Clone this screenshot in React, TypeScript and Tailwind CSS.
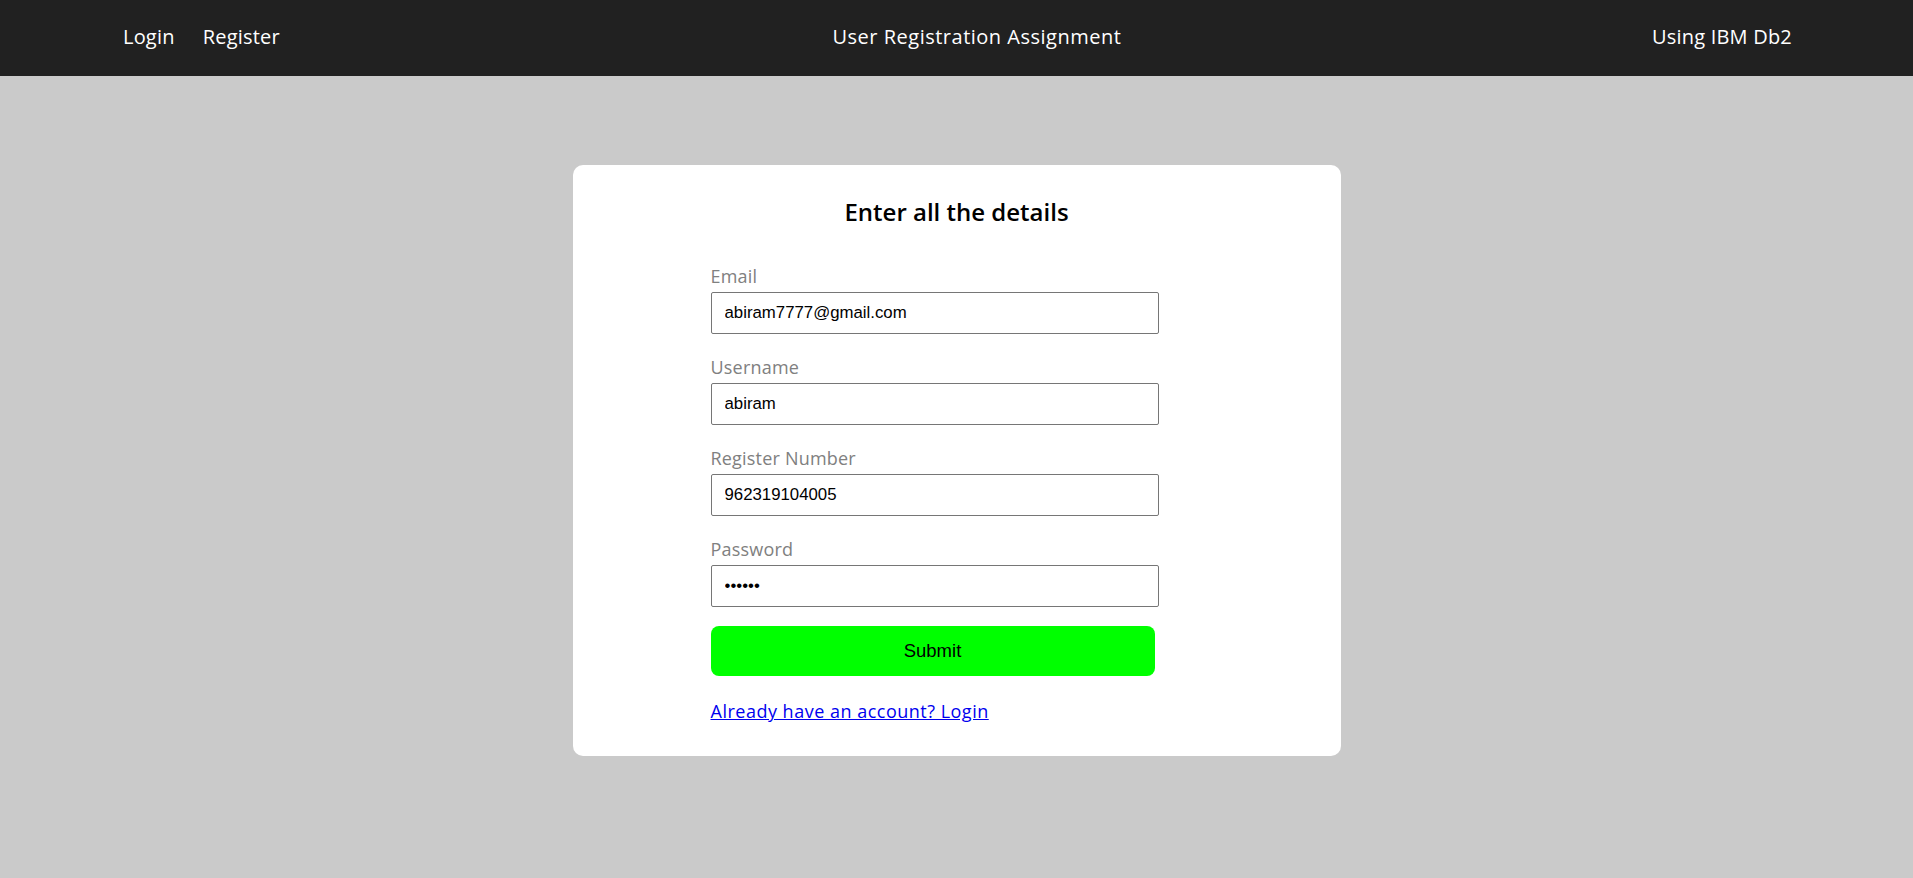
import { useState } from 'react';

const poppins = { fontFamily: '"Open Sans", "Noto Sans", sans-serif' };

type Field = { label: string; type: string; value: string };

const fields: Field[] = [
    { label: 'Email', type: 'email', value: 'abiram7777@gmail.com' },
    { label: 'Username', type: 'text', value: 'abiram' },
    { label: 'Register Number', type: 'text', value: '962319104005' },
    { label: 'Password', type: 'password', value: 'abiram' },
];

function Navbar() {
    return (
        <nav className="h-[76px] bg-[#212121] text-white flex items-center justify-between pl-[123px] pr-[121px] pb-[3px] font-['Open_Sans',sans-serif] text-[20px] tracking-[0.5px]">
            <div className="flex items-center gap-[28px] tracking-[0.2px]">
                <a href="#" className="hover:text-gray-300">Login</a>
                <a href="#" className="hover:text-gray-300">Register</a>
            </div>
            <div className="ml-[22px]">User Registration Assignment</div>
            <div className="tracking-[0.2px]">Using IBM Db2</div>
        </nav>
    );
}

export default function App() {
    const [values, setValues] = useState(fields.map((f) => f.value));

    return (
        <div className="min-h-screen w-full bg-[#cacaca]" style={poppins}>
            <Navbar />

            {/* Registration card */}
            <div className="flex justify-center pt-[89px] pb-[122px]">
                <div className="w-[768px] bg-white rounded-[10px] pt-[28px] pb-[33px]">
                    <h2 className="text-center text-[24px] leading-[38px] font-semibold text-black font-['Open_Sans',sans-serif]">
                        Enter all the details
                    </h2>

                    <form className="ml-[138px] w-[448px] mt-[33px] flex flex-col" onSubmit={(e) => e.preventDefault()}>
                        <div className="flex flex-col gap-[21px]">
                            {fields.map((f, i) => (
                                <div key={f.label} className="flex flex-col">
                                    <label className="text-[18px] leading-[25px] tracking-[0.2px] text-[#808080] font-['Open_Sans',sans-serif]">
                                        {f.label}
                                    </label>
                                    <input
                                        type={f.type}
                                        value={values[i]}
                                        onChange={(e) => setValues(values.map((v, j) => (j === i ? e.target.value : v)))}
                                        className="mt-[3px] h-[42px] w-[448px] border border-[#767676] rounded-[2px] px-[13px] text-[16.8px] text-black font-['Liberation_Sans',Arial,sans-serif] outline-none"
                                    />
                                </div>
                            ))}
                        </div>

                        <button
                            type="submit"
                            className="mt-[19px] h-[50px] w-[444px] bg-[#00ff00] rounded-[8px] text-[18.5px] text-black font-['Liberation_Sans',Arial,sans-serif]"
                        >
                            Submit
                        </button>

                        <a
                            href="#"
                            className="mt-[23px] self-start text-[18px] leading-[24px] tracking-[0.5px] text-[#0000ee] underline font-['Open_Sans',sans-serif]"
                        >
                            Already have an account? Login
                        </a>
                    </form>
                </div>
            </div>
        </div>
    );
}
